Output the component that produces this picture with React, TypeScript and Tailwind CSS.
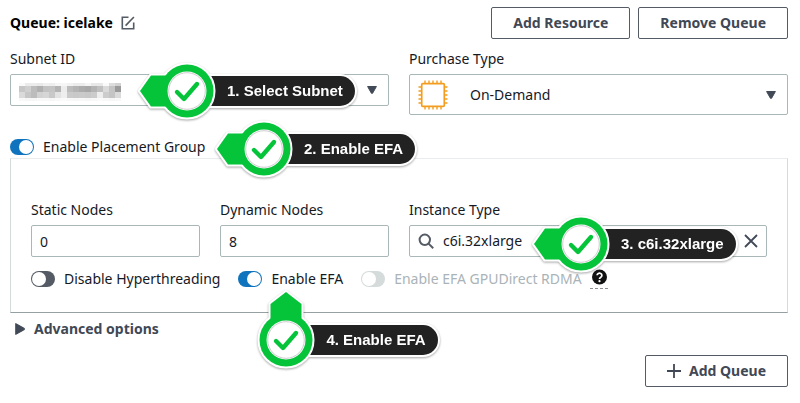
import { useState } from "react";
import type { ReactNode } from "react";

function EditIcon() {
  return (
    <svg viewBox="0 0 14 14" className="h-3.5 w-3.5" fill="none" stroke="#545b64" strokeWidth="1.6" aria-hidden="true">
      <path d="M7.500 1.300H1.300v11.400h11.400V6.500" />
      <path d="M4.600 9.600 12.900 1" />
    </svg>
  );
}

function ChipIcon() {
  const pins = [8, 12, 16, 20, 24];
  return (
    <svg viewBox="0 0 32 32" className="h-8 w-8" fill="none" stroke="#f29d1f" aria-hidden="true">
      <rect x="4.7" y="4.7" width="22.6" height="22.6" rx="1" strokeWidth="1.7" />
      {pins.map((p) => (
        <path key={p} strokeWidth="1.400" d={`M${p} 1.500v3M${p} 27.500v3M1.500 ${p}h3M27.500 ${p}h3`} />
      ))}
    </svg>
  );
}

function Caret({ className }: { className: string }) {
  return (
    <svg viewBox="0 0 10 8" className={className} aria-hidden="true">
      <path d="M.6.5h8.8L5.6 7.2Q5 8 4.4 7.2Z" fill="#424a57" stroke="#424a57" strokeLinejoin="round" />
    </svg>
  );
}

const mosaicRows = [
  { y: 4, h: 3, fills: "#fafafa #ebebeb #ececec #e9e9e9 #f0f0f0 #eeeeee #f6f6f6 #f6f6f6 #f2f2f2 #ececec #ececec #f4f4f4 #e8e8e8 #e8e8e8 #fafafa #dddddd #d2d2d2" },
  { y: 7, h: 6, fills: "#c6c6c6 #cfcfcf #bcbcbc #b0b0b0 #c2c2c2 #c4c4c4 #b4b4b4 #ececec #bcbcbc #b4b4b4 #acacac #a8a8a8 #b4b4b4 #c0c0c0 #dadada #c4c4c4 #9a9a9a" },
  { y: 13, h: 6, fills: "#dadada #c6c6c6 #bcbcbc #d2d2d2 #d6d6d6 #c8c8c8 #e2e2e2 #eeeeee #cacaca #c8c8c8 #cacaca #c8c8c8 #cccccc #eeeeee #cccccc #c4c4c4 #dadada" },
  { y: 19, h: 3, fills: "#f8f8f8 #f6f6f6 #f6f6f6 #f8f8f8 #f8f8f8 #f6f6f6 #f8f8f8 #fafafa #f8f8f8 #f6f6f6 #f8f8f8 #f6f6f6 #f8f8f8 #fafafa #f8f8f8 #f6f6f6 #f8f8f8" },
];

function MaskedValue() {
  return (
    <svg viewBox="0 0 108 22" className="h-[22px] w-[108px]" shapeRendering="crispEdges" aria-hidden="true">
      {mosaicRows.map((row) =>
        row.fills
          .split(" ")
          .map((fill, x) => <rect key={`${x}-${row.y}`} x={x * 6 + 1} y={row.y} width="6" height={row.h} fill={fill} />),
      )}
    </svg>
  );
}

function Callout({ place, up = false, children }: { place: string; up?: boolean; children: ReactNode }) {
  const cx = up ? 30 : 50;
  const cy = up ? 50 : 30;
  const arrow = up ? "M30 2 45.5 14V50H14.5V14Z" : "M3 30 14 14.5H50V45.5H14Z";
  return (
    <div className={`pointer-events-none absolute z-10 flex items-end drop-shadow-[0_1px_1px_rgba(0,0,0,0.35)] ${place}`}>
      <svg
        viewBox={up ? "0 0 60 80" : "0 0 80 60"}
        className={up ? "relative z-10 h-20 w-[60px] shrink-0" : "relative z-10 h-[60px] w-20 shrink-0"}
        aria-hidden="true"
      >
        <g fill="#fff" stroke="#fff" strokeWidth="4" strokeLinejoin="round">
          <path d={arrow} />
          <circle cx={cx} cy={cy} r="26.5" />
        </g>
        <path d={arrow} fill="#05c43a" />
        <circle cx={cx} cy={cy} r="26.5" fill="#05c43a" />
        <circle cx={cx} cy={cy} r="19.5" fill="#fff" />
        <circle cx={cx} cy={cy} r="18.3" fill="#fff" stroke="#c9c4c9" strokeWidth="0.9" />
        <path
          d={`M${cx - 10} ${cy + 1}l7 7 13-15`}
          fill="none"
          stroke="#05c43a"
          strokeWidth="4.4"
          strokeLinecap="round"
          strokeLinejoin="round"
        />
      </svg>
      <span className="mb-[15px] -ml-[30px] rounded-r-full bg-[#222] pr-3 pl-10 font-['Liberation_Sans',Arial,sans-serif] text-[15px] leading-[30px] font-bold whitespace-nowrap text-white ring-2 ring-white">
        {children}
      </span>
    </div>
  );
}

function Toggle({ label, initial = false, disabled = false }: { label: string; initial?: boolean; disabled?: boolean }) {
  const [on, setOn] = useState(initial);
  return (
    <label className={`flex items-center gap-[9px] whitespace-nowrap ${disabled ? "text-[#aab3b7]" : ""}`}>
      <input
        type="checkbox"
        checked={on}
        disabled={disabled}
        onChange={(e) => setOn(e.target.checked)}
        className="h-4 w-6 shrink-0 appearance-none rounded-full bg-[#545b64] p-px before:block before:h-3.5 before:w-3.5 before:rounded-full before:bg-white checked:bg-[#0f73bd] checked:before:ml-2 disabled:bg-[#d5dbdb]"
      />
      {label}
    </label>
  );
}

function NumberField({ id, label, value }: { id: string; label: string; value: string }) {
  return (
    <div className="flex flex-col gap-[5px]">
      <label htmlFor={id}>{label}</label>
      <input
        id={id}
        inputMode="numeric"
        defaultValue={value}
        className="h-8 w-full rounded-xs border border-[#aab7b8] bg-white px-2"
      />
    </div>
  );
}

const buttonClass =
  "flex h-8 items-center justify-center gap-2 rounded-xs border border-[#545b64] bg-white px-[21px] font-bold whitespace-nowrap text-[#414855]";

export default function App() {
  return (
    <main className="bg-white pt-[7px] pr-3 pb-4 pl-2.5 font-['Noto_Sans','Open_Sans',sans-serif] text-sm text-[#16191f]">
      <header className="flex items-center gap-2">
        <h1 className="text-sm font-bold text-black">Queue: icelake</h1>
        <button type="button" aria-label="Edit queue name" className="mr-auto">
          <EditIcon />
        </button>
        <button type="button" className={buttonClass}>Add Resource</button>
        <button type="button" className={buttonClass}>Remove Queue</button>
      </header>

      <div className="mt-2.5 grid grid-cols-2 items-start gap-5">
        <div className="flex flex-col gap-[5px]">
          <label htmlFor="subnet">Subnet ID</label>
          <div className="relative">
            <select id="subnet" className="block h-8 w-full appearance-none rounded-xs border border-[#aab7b8] bg-white px-2">
              <option value="" />
            </select>
            <span className="pointer-events-none absolute inset-0 flex items-center justify-between pr-3 pl-2">
              <MaskedValue />
              <Caret className="h-2 w-2.5" />
            </span>
            <Callout place="-top-[13px] left-[127px]">1. Select Subnet</Callout>
          </div>
        </div>
        <div className="flex flex-col gap-[5px]">
          <label htmlFor="purchase">Purchase Type</label>
          <div className="relative">
            <select
              id="purchase"
              className="block h-[41px] w-full appearance-none rounded-xs border border-[#aab7b8] bg-white pr-8 pl-[60px]"
            >
              <option>On-Demand</option>
            </select>
            <span className="pointer-events-none absolute inset-0 flex items-center justify-between pr-3 pl-2">
              <ChipIcon />
              <Caret className="h-2 w-2.5" />
            </span>
          </div>
        </div>
      </div>

      <div className="relative mt-[22px] flex">
        <Toggle label="Enable Placement Group" initial />
        <Callout place="-top-[18px] left-[204px]">2. Enable EFA</Callout>
      </div>

      <section className="mt-px border border-t-[#eaeded] border-r-[#d5dbdb] border-b-[#95a0a3] border-l-[#d5dbdb] px-5 pt-[41px] pb-[23px]">
        <div className="grid grid-cols-4 gap-5">
          <NumberField id="static" label="Static Nodes" value="0" />
          <NumberField id="dynamic" label="Dynamic Nodes" value="8" />
          <div className="col-span-2 flex flex-col gap-[5px]">
            <label htmlFor="instance">Instance Type</label>
            <div className="relative flex h-8 items-center rounded-xs border border-[#aab7b8] px-2">
              <svg viewBox="0 0 16 16" className="h-4 w-4 shrink-0" fill="none" stroke="#545b64" strokeWidth="2" aria-hidden="true">
                <circle cx="6.8" cy="6.8" r="5.2" />
                <path d="m10.600 10.600 4.600 4.600" />
              </svg>
              <input id="instance" defaultValue="c6i.32xlarge" className="ml-[9px] min-w-0 flex-1 bg-transparent" />
              <button type="button" aria-label="Clear instance type" className="shrink-0">
                <svg viewBox="0 0 14 14" className="h-3.5 w-3.5" fill="none" stroke="#424a57" strokeWidth="1.8" aria-hidden="true">
                  <path d="m1 1 12 12M13 1 1 13" />
                </svg>
              </button>
              <Callout place="-top-3 left-[121px]">3. c6i.32xlarge</Callout>
            </div>
          </div>
        </div>
        <div className="mt-3 flex items-center gap-[18px]">
          <Toggle label="Disable Hyperthreading" />
          <div className="relative">
            <Toggle label="Enable EFA" initial />
            <Callout up place="top-[21px] left-[18px]">4. Enable EFA</Callout>
          </div>
          <div className="flex h-5 items-center gap-2">
            <Toggle label="Enable EFA GPUDirect RDMA" disabled />
            <button type="button" aria-label="About GPUDirect RDMA">
              <svg viewBox="0 0 20 22" className="h-[22px] w-5" aria-hidden="true">
                <circle cx="9.5" cy="9" r="7.5" fill="#111" />
                <path
                  d="M7.100 7.300a2.400 2.200 0 1 1 3.700 1.900C9.900 9.800 9.500 10.100 9.500 11"
                  fill="none"
                  stroke="#fff"
                  strokeWidth="1.7"
                />
                <circle cx="9.5" cy="13.2" r="1.1" fill="#fff" />
                <path d="M0 20.500h20" stroke="#8d8f93" strokeDasharray="3 2" />
              </svg>
            </button>
          </div>
        </div>
      </section>

      <button type="button" className="mt-1.5 flex items-center gap-2 pl-1 font-bold text-[#414855]">
        <Caret className="h-3 w-3 -rotate-90" />
        Advanced options
      </button>

      <div className="mt-4 flex justify-end">
        <button type="button" className={buttonClass}>
          <svg viewBox="0 0 14 14" className="h-3.5 w-3.5" fill="none" stroke="#414855" strokeWidth="1.8" aria-hidden="true">
            <path d="M7 0v14M0 7h14" />
          </svg>
          Add Queue
        </button>
      </div>
    </main>
  );
}
